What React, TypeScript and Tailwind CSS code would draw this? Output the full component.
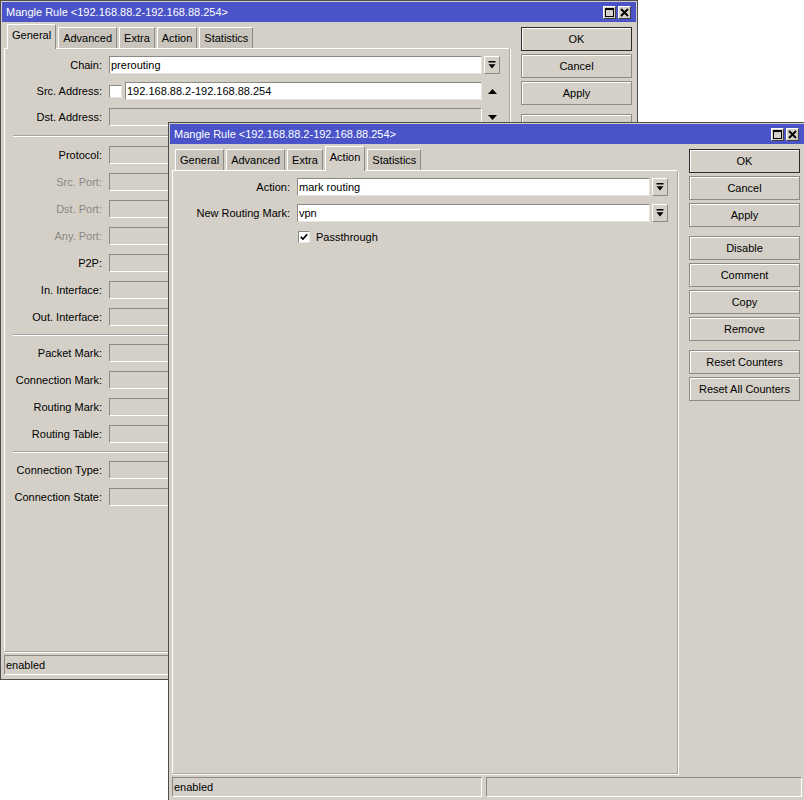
import React from 'react';

type RowProps = {
  label: string;
  lw: string;
  dim?: boolean;
  className?: string;
  children: React.ReactNode;
};

function Row({ label, lw, dim, className, children }: RowProps) {
  return (
    <div className={`flex h-[18px] items-center ${className ?? ''}`}>
      <div className={`${lw} shrink-0 text-right ${dim ? 'text-[#8a8883]' : 'text-black'}`}>{label}:</div>
      <div className="ml-[7px] flex flex-1 items-center">{children}</div>
    </div>
  );
}

function Input({ value, disabled }: { value?: string; disabled?: boolean }) {
  return (
    <div
      className={`flex h-[18px] flex-1 items-center border border-t-[#8c8a85] border-l-[#8c8a85] border-b-[#e6e4df] border-r-[#e6e4df] pl-[1px] ${
        disabled ? 'bg-[#d4d0c8] border-b-white border-r-white' : 'bg-white'
      }`}
    >
      {value}
    </div>
  );
}

// dropdown button: bar over down-triangle
function DropBtn() {
  return (
    <div className="ml-[2px] flex h-[18px] w-[16px] shrink-0 items-center justify-center border border-t-white border-l-white border-b-[#8c8a85] border-r-[#8c8a85] bg-[#d4d0c8]">
      <svg width="8" height="8" viewBox="0 0 8 8">
        <rect x="0.5" y="0" width="7" height="1.5" fill="#000" />
        <path d="M0.5 3.2h7L4 7.4z" fill="#000" />
      </svg>
    </div>
  );
}

function Arrow({ up }: { up?: boolean }) {
  return (
    <div className="ml-[2px] flex h-[18px] w-[16px] shrink-0 items-center justify-center">
      <svg width="9" height="5" viewBox="0 0 9 5">
        <path d={up ? 'M0 5h9L4.5 0z' : 'M0 0h9L4.5 5z'} fill="#000" />
      </svg>
    </div>
  );
}

function Spacer() {
  return <div className="ml-[2px] w-[16px] shrink-0" />;
}

function Sep({ className }: { className?: string }) {
  return <div className={`mx-[8px] h-[2px] border-t border-b border-t-[#a8a6a0] border-b-white ${className ?? ''}`} />;
}

function Btn({ label, def, className }: { label: string; def?: boolean; className?: string }) {
  return (
    <button
      type="button"
      className={`flex h-[24px] w-full items-center justify-center border bg-[#d4d0c8] shadow-[inset_1px_1px_0_#ffffff] ${
        def ? 'border-[#2b2b2b]' : 'border-[#8d8b86]'
      } ${className ?? ''}`}
    >
      {label}
    </button>
  );
}

const TABS = ['General', 'Advanced', 'Extra', 'Action', 'Statistics'];

type WindowProps = {
  pos: string;
  active: number;
  children: React.ReactNode;
};

function Window({ pos, active, children }: WindowProps) {
  return (
    <div className={`absolute ${pos} flex h-[680px] w-[638px] flex-col border border-[#4d4d4d] bg-[#d4d0c8] p-px`}>
      {/* title bar */}
      <div className="flex h-[20px] shrink-0 items-center bg-[#4a54c8] pl-[4px] pr-[5px] text-white">
        <span>Mangle Rule &lt;192.168.88.2-192.168.88.254&gt;</span>
        <div className="ml-auto flex gap-[2px]">
          <div className="flex h-[13px] w-[13px] items-center justify-center border border-t-white border-l-white border-b-[#404040] border-r-[#404040] bg-[#d4d0c8]">
            <svg width="9" height="9" viewBox="0 0 9 9">
              <rect x="0.5" y="0.5" width="8" height="8" fill="none" stroke="#000" />
              <rect x="0.5" y="0.5" width="8" height="1.5" fill="#000" />
            </svg>
          </div>
          <div className="flex h-[13px] w-[13px] items-center justify-center border border-t-white border-l-white border-b-[#404040] border-r-[#404040] bg-[#d4d0c8]">
            <svg width="9" height="9" viewBox="0 0 9 9">
              <path d="M1 1l7 7M8 1l-7 7" stroke="#000" strokeWidth="1.8" />
            </svg>
          </div>
        </div>
      </div>

      {/* body */}
      <div className="flex min-h-0 flex-1">
        <div className="ml-[2px] flex w-[506px] flex-col">
          <div className="mt-[2px] flex h-[24px] shrink-0 items-end gap-[2px] pl-[3px]">
            {TABS.map((t, i) =>
              i === active ? (
                <div
                  key={t}
                  className="relative z-10 -mb-px flex h-[25px] items-center border border-b-0 border-t-white border-l-white border-r-[#8c8a85] bg-[#d4d0c8] px-[4px] pb-[3px]"
                >
                  {t}
                </div>
              ) : (
                <div
                  key={t}
                  className="flex h-[21px] items-center border border-b-0 border-t-white border-l-white border-r-[#8c8a85] bg-[#c9c5bd] px-[4px]"
                >
                  {t}
                </div>
              )
            )}
          </div>
          <div className="flex flex-1 flex-col border border-[#a8a6a0] border-t-white border-l-white pr-[9px] pt-[7px] shadow-[1px_1px_0_#ffffff]">
            {children}
          </div>
        </div>
        <div className="ml-[11px] flex w-[111px] flex-col gap-[3px] pt-[5px]">
          <Btn label="OK" def />
          <Btn label="Cancel" />
          <Btn label="Apply" />
          <Btn label="Disable" className="mt-[6px]" />
          <Btn label="Comment" />
          <Btn label="Copy" />
          <Btn label="Remove" />
          <Btn label="Reset Counters" className="mt-[6px]" />
          <Btn label="Reset All Counters" />
        </div>
      </div>

      {/* status bar */}
      <div className="mb-[3px] mt-[3px] flex h-[20px] shrink-0">
        <div className="ml-[2px] flex w-[310px] items-center border border-t-[#8c8a85] border-l-[#8c8a85] border-b-white border-r-white pl-px">
          enabled
        </div>
        <div className="ml-[4px] mr-[2px] flex-1 border border-t-[#8c8a85] border-l-[#8c8a85] border-b-white border-r-white" />
      </div>
    </div>
  );
}

export default function App() {
  return (
    <div className="relative h-[800px] w-[804px] overflow-hidden bg-white font-['Liberation_Sans',Arial,sans-serif] text-[11px] leading-[13px] text-black">
      <Window pos="left-0 top-0" active={0}>
        <div className="flex flex-col gap-[8px]">
          <Row label="Chain" lw="w-[97px]">
            <Input value="prerouting" />
            <DropBtn />
          </Row>
          <Row label="Src. Address" lw="w-[97px]">
            <div className="h-[13px] w-[13px] shrink-0 border border-t-[#8c8a85] border-l-[#8c8a85] border-b-[#e6e4df] border-r-[#e6e4df] bg-white" />
            <div className="ml-[3px] flex flex-1">
              <Input value="192.168.88.2-192.168.88.254" />
            </div>
            <Arrow up />
          </Row>
          <Row label="Dst. Address" lw="w-[97px]">
            <Input disabled />
            <Arrow />
          </Row>
        </div>
        <Sep className="mt-[9px]" />
        <div className="mt-[9px] flex flex-col gap-[9px]">
          <Row label="Protocol" lw="w-[97px]">
            <Input disabled />
            <Spacer />
          </Row>
          <Row label="Src. Port" lw="w-[97px]" dim>
            <Input disabled />
            <Spacer />
          </Row>
          <Row label="Dst. Port" lw="w-[97px]" dim>
            <Input disabled />
            <Spacer />
          </Row>
          <Row label="Any. Port" lw="w-[97px]" dim>
            <Input disabled />
            <Spacer />
          </Row>
          <Row label="P2P" lw="w-[97px]">
            <Input disabled />
            <Spacer />
          </Row>
          <Row label="In. Interface" lw="w-[97px]">
            <Input disabled />
            <Spacer />
          </Row>
          <Row label="Out. Interface" lw="w-[97px]">
            <Input disabled />
            <Spacer />
          </Row>
        </div>
        <Sep className="mt-[8px]" />
        <div className="mt-[8px] flex flex-col gap-[9px]">
          <Row label="Packet Mark" lw="w-[97px]">
            <Input disabled />
            <Spacer />
          </Row>
          <Row label="Connection Mark" lw="w-[97px]">
            <Input disabled />
            <Spacer />
          </Row>
          <Row label="Routing Mark" lw="w-[97px]">
            <Input disabled />
            <Spacer />
          </Row>
          <Row label="Routing Table" lw="w-[97px]">
            <Input disabled />
            <Spacer />
          </Row>
        </div>
        <Sep className="mt-[8px]" />
        <div className="mt-[8px] flex flex-col gap-[9px]">
          <Row label="Connection Type" lw="w-[97px]">
            <Input disabled />
            <Spacer />
          </Row>
          <Row label="Connection State" lw="w-[97px]">
            <Input disabled />
            <Spacer />
          </Row>
        </div>
      </Window>

      <Window pos="left-[168px] top-[122px]" active={3}>
        <div className="flex flex-col gap-[8px]">
          <Row label="Action" lw="w-[117px]">
            <Input value="mark routing" />
            <DropBtn />
          </Row>
          <Row label="New Routing Mark" lw="w-[117px]">
            <Input value="vpn" />
            <DropBtn />
          </Row>
          <div className="flex h-[14px] items-center pl-[125px]">
            <div className="flex h-[12px] w-[12px] items-center justify-center border border-t-[#8c8a85] border-l-[#8c8a85] border-b-[#e6e4df] border-r-[#e6e4df] bg-white">
              <svg width="8" height="8" viewBox="0 0 8 8">
                <path d="M0.8 3.8l2.2 2.3L7.2 1.2" fill="none" stroke="#000" strokeWidth="1.7" />
              </svg>
            </div>
            <span className="ml-[6px]">Passthrough</span>
          </div>
        </div>
      </Window>
    </div>
  );
}
